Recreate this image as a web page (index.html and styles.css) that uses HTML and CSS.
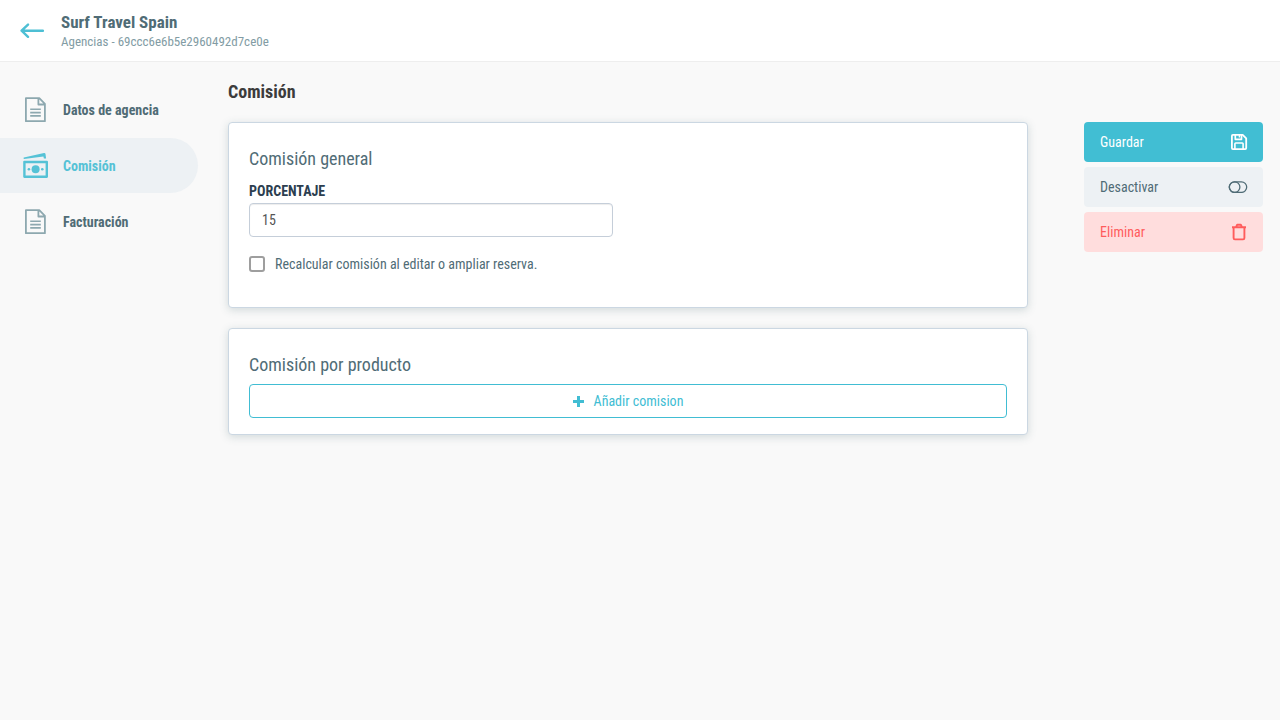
FILE: index.html
```html
<!DOCTYPE html>
<html lang="es">
<head>
<meta charset="utf-8">
<title>Surf Travel Spain</title>
<meta name="viewport" content="width=device-width, initial-scale=1">
<link rel="stylesheet" href="styles.css">
</head>
<body>
<header class="topbar">
  <a class="back" href="#" aria-label="Volver">
    <svg width="24" height="16" viewBox="0 0 24 16" fill="none" stroke="currentColor" stroke-width="2.4" stroke-linecap="round" stroke-linejoin="round"><path d="M23 7.700H2M8 1.600 1.600 7.700 8 13.800"/></svg>
  </a>
  <div class="heading">
    <h1 class="name">Surf Travel Spain</h1>
    <p class="trail">Agencias - 69ccc6e6b5e2960492d7ce0e</p>
  </div>
</header>
<div class="layout">
  <nav class="menu">
    <a class="item" href="#">
      <svg class="item-icon" width="26" height="26" viewBox="0 0 26 26" fill="none" stroke="currentColor" stroke-width="1.8" stroke-linejoin="round"><path d="M2.900 1.200h13.400l5.600 5.600v17.400h-19zM15.400 1.200v6.300h6.500"/><path d="M7.200 12.300h10.600M7.200 15.600h10.600M7.200 18.900h10.600" stroke-width="1.6"/></svg>
      <span>Datos de agencia</span>
    </a>
    <a class="item active" href="#" aria-current="page">
      <svg class="item-icon" width="26" height="26" viewBox="0 0 26 26" fill="currentColor"><path d="M.9 4.400 21 .1q1.300-.2 1.500.9l.6 4.500h-2.200l-.5-1.900L1 6Q.1 5 .9 4.400z"/><path fill-rule="evenodd" d="M1.300 7.700h22.600q1.100 0 1.100 1.100v15q0 1.100-1.100 1.100H1.300q-1.100 0-1.100-1.100v-15q0-1.100 1.100-1.100zM2.600 10.200v12.200h20V10.200z"/><circle cx="12.600" cy="16.300" r="4"/><circle cx="5.900" cy="16.300" r="1.300"/><circle cx="19.300" cy="16.300" r="1.300"/></svg>
      <span>Comisión</span>
    </a>
    <a class="item" href="#">
      <svg class="item-icon" width="26" height="26" viewBox="0 0 26 26" fill="none" stroke="currentColor" stroke-width="1.8" stroke-linejoin="round"><path d="M2.900 1.200h13.400l5.600 5.600v17.400h-19zM15.400 1.200v6.300h6.500"/><path d="M7.200 12.300h10.600M7.200 15.600h10.600M7.200 18.900h10.600" stroke-width="1.6"/></svg>
      <span>Facturación</span>
    </a>
  </nav>
  <main class="content">
    <h2 class="title">Comisión</h2>
    <section class="card general">
      <h3 class="card-title">Comisión general</h3>
      <label class="label" for="pct">Porcentaje</label>
      <input class="field" id="pct" type="text" inputmode="numeric" value="15">
      <div class="check-row">
        <input class="check" id="recalc" type="checkbox">
        <label for="recalc">Recalcular comisión al editar o ampliar reserva.</label>
      </div>
    </section>
    <section class="card">
      <h3 class="card-title">Comisión por producto</h3>
      <button class="add" type="button">
        <svg width="11" height="11" viewBox="0 0 11 11" fill="currentColor"><path d="M4 0h3v4h4v3H7v4H4V7H0V4h4z"/></svg>
        <span>Añadir comision</span>
      </button>
    </section>
  </main>
  <aside class="actions">
    <button class="action save" type="button">Guardar
      <svg width="18" height="18" viewBox="0 0 18 18" fill="none" stroke="currentColor" stroke-width="1.800" stroke-linejoin="round"><path d="M2.900 1.900h9.800l3.500 3.500v9.700q0 1-1 1H2.900q-1 0-1-1V2.900q0-1 1-1z"/><path d="M5.300 2v4.300h6.200V2" stroke-width="1.700"/><path d="M4.900 16v-5.200q0-.8.8-.8h6.600q.8 0 .8.8V16" stroke-width="1.600"/><path d="M9.400 2v2.500" stroke-width="1.400"/></svg>
    </button>
    <button class="action toggle" type="button">Desactivar
      <svg width="20" height="12" viewBox="0 0 20 12" fill="none" stroke="currentColor" stroke-width="1.300"><rect x="1.300" y=".8" width="17.400" height="10.600" rx="5.300"/><circle cx="6.600" cy="6.100" r="5.300"/></svg>
    </button>
    <button class="action delete" type="button">Eliminar
      <svg width="18" height="18" viewBox="0 0 18 18" fill="none" stroke="currentColor" stroke-width="1.900" stroke-linejoin="round"><path d="M2 4.200h14M6 4.200l1.200-2.500h3.600L12 4.200M3.600 4.200v10.900q0 1.300 1.300 1.300h8.200q1.300 0 1.300-1.300V4.200"/></svg>
    </button>
  </aside>
</div>
</body>
</html>
```

FILE: styles.css
```css
* {
  box-sizing: border-box;
}

body {
  margin: 0;
  min-height: 100vh;
  background: #f9f9f9;
  color: #506c76;
  font-family: "Roboto Condensed", Roboto, sans-serif;
  font-size: 14px;
  line-height: 20px;
}

h1, h2, h3, p {
  margin: 0;
}

a {
  color: inherit;
  text-decoration: none;
}

button, input {
  font: inherit;
}

svg {
  display: block;
  flex: none;
}

.topbar {
  display: flex;
  align-items: center;
  gap: 17px;
  height: 62px;
  padding: 0 20px;
  background: #fff;
  border-bottom: 1px solid #eee;
}

.back {
  color: #4dbfd4;
}

.name {
  font-size: 17px;
  line-height: 22px;
  font-weight: 700;
}

.trail {
  font-size: 13px;
  line-height: 18px;
  color: #829ca4;
}

.layout {
  display: grid;
  grid-template-columns: 198px minmax(0, 1fr) 179px;
  padding-right: 17px;
}

.menu {
  display: flex;
  flex-direction: column;
  gap: 1px;
  padding-top: 20px;
}

.item {
  display: flex;
  align-items: center;
  gap: 14px;
  height: 55px;
  padding-left: 23px;
  border-radius: 0 28px 28px 0;
  font-weight: 700;
}

.item-icon {
  color: #8da8af;
}

.active {
  background: #edf1f4;
}

.active, .active .item-icon {
  color: #55c2d6;
}

.content {
  display: flex;
  flex-direction: column;
  gap: 20px;
  padding: 18px 56px 20px 30px;
}

.title {
  padding-top: 2px;
  font-size: 18px;
  line-height: 20px;
  color: #3c3c3c;
}

.card {
  padding: 24px 20px 16px;
  background: #fff;
  border: 1px solid #cbd7e2;
  border-radius: 4px;
  box-shadow: 0 2px 8px rgba(84, 116, 122, 0.24);
}

.general {
  padding-bottom: 33px;
}

.card-title {
  margin-bottom: 7px;
  font-size: 18px;
  line-height: 24px;
  font-weight: 400;
}

.label {
  display: block;
  padding-top: 3px;
  margin-bottom: 2px;
  color: #2c3e50;
  font-weight: 700;
  text-transform: uppercase;
}

.field {
  display: block;
  width: 48%;
  height: 34px;
  padding: 0 12px;
  border: 1px solid #c5ced9;
  border-radius: 4px;
  background: #fff;
  box-shadow: inset 0 1px 1px rgba(0, 0, 0, 0.075);
  color: #555;
}

.check-row {
  display: flex;
  align-items: center;
  gap: 10px;
  margin-top: 17px;
}

.check {
  appearance: none;
  width: 16px;
  height: 16px;
  margin: 0;
  border: 2px solid #9e9e9e;
  border-radius: 3px;
  background: #fff;
}

.check:checked {
  background: #41bdd3;
}

.add {
  display: flex;
  align-items: center;
  justify-content: center;
  gap: 10px;
  width: 100%;
  height: 34px;
  border: 1px solid #41bdd3;
  border-radius: 4px;
  background: #fff;
  color: #41bdd3;
}

.actions {
  display: flex;
  flex-direction: column;
  gap: 5px;
  padding-top: 60px;
}

.action {
  display: flex;
  align-items: center;
  justify-content: space-between;
  height: 40px;
  padding: 0 15px 0 16px;
  border: 0;
  border-radius: 4px;
}

.save {
  background: #41bed3;
  color: #fff;
}

.toggle {
  background: #edf1f4;
  color: #506c76;
}

.delete {
  background: #ffdddd;
  color: #ff5c5c;
}
```
